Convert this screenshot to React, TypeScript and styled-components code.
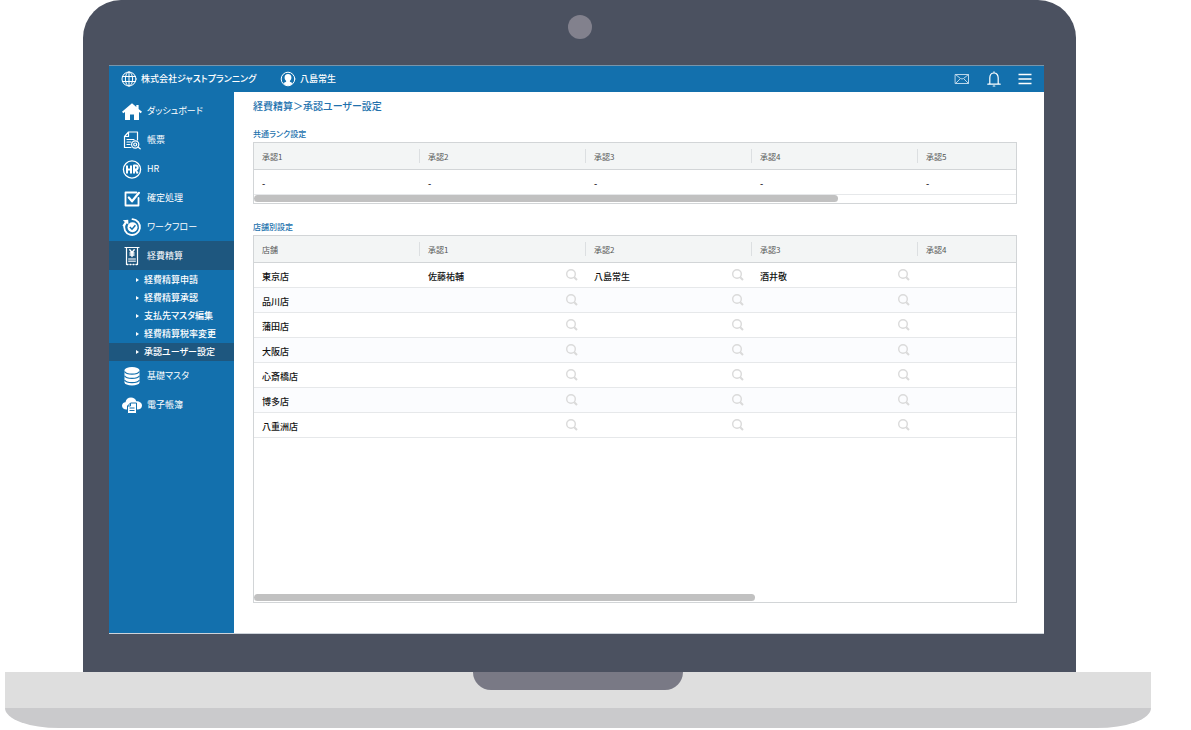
import React from 'react';
import styled, { createGlobalStyle } from 'styled-components';

const color = {
  lid: '#4b5160',
  camera: '#82818d',
  brand: '#1370ad',
  active: '#1e577f',
  link: '#2271ad',
  line: '#d2d5d7',
};

const GlobalStyle = createGlobalStyle`
  * { box-sizing: border-box; }
  body {
    margin: 0;
    background: #fff;
    font-family: "Noto Sans CJK JP", "Noto Sans", sans-serif;
    font-feature-settings: "palt";
    font-size: 9px;
    line-height: 12px;
    color: #111;
  }
  h1, h2 { margin: 0; }
  button { padding: 0; border: 0; background: none; color: inherit; font: inherit; cursor: pointer; }
  a { color: inherit; text-decoration: none; }
  svg { display: block; flex: none; }
`;

const Lid = styled.div`
  margin: 0 115px 0 83px;
  padding: 0 32px 38px 26px;
  background: ${color.lid};
  border-radius: 38px 38px 0 0;
`;

const Bezel = styled.div`
  height: 65px;
  display: flex;
  justify-content: center;
  padding: 15px 0 0 6px;
`;

const Camera = styled.span`
  width: 24px;
  height: 24px;
  border-radius: 50%;
  background: ${color.camera};
`;

const Screen = styled.div`
  display: flex;
  flex-direction: column;
  min-height: 569px;
  background: #fff;
  border-bottom: 1px solid #cdd3da;
`;

const TopBar = styled.header`
  display: flex;
  align-items: center;
  gap: 34px;
  height: 27px;
  padding: 0 12px;
  background: ${color.brand};
  border-top: 1px solid #7795ab;
  color: #fff;
  font-weight: 500;
`;

const Identity = styled.div`
  display: flex;
  align-items: center;
  gap: 4px;
`;

const Company = styled(Identity)`
  width: 125px;
  white-space: nowrap;
`;

const Tools = styled.div`
  display: flex;
  align-items: center;
  gap: 16px;
  margin-left: auto;
`;

const Body = styled.div`
  display: flex;
  flex: 1;
`;

const Sidebar = styled.nav`
  width: 125px;
  flex: none;
  padding-top: 4px;
  background: ${color.brand};
  color: #fff;
`;

const MenuList = styled.ul`
  margin: 0;
  padding: 0;
  list-style: none;
`;

const SubList = styled(MenuList)`
  padding-top: 1px;
`;

const NavLink = styled.a<{ $active?: boolean }>`
  display: flex;
  align-items: center;
  gap: 5px;
  height: 29px;
  padding-left: 13px;
  background: ${(p) => (p.$active ? color.active : 'transparent')};
`;

const SubLink = styled.a<{ $active?: boolean }>`
  display: flex;
  align-items: center;
  gap: 5px;
  height: 18px;
  padding-left: 27px;
  font-weight: 500;
  background: ${(p) => (p.$active ? color.active : 'transparent')};
  &::before {
    content: '';
    border: 2px solid transparent;
    border-left: 3px solid #fff;
    border-right: 0;
  }
`;

const Main = styled.main`
  display: flex;
  flex-direction: column;
  flex: 1;
  min-width: 0;
  padding: 6px 27px 30px 19px;
`;

const Title = styled.h1`
  font-size: 10px;
  line-height: 16px;
  font-weight: 500;
  color: ${color.link};
`;

const SectionTitle = styled.h2<{ $gap: number }>`
  margin-top: ${(p) => p.$gap}px;
  font-size: 8px;
  line-height: 16px;
  font-weight: 500;
  color: ${color.link};
`;

const GridBox = styled.div<{ $fill?: boolean }>`
  display: flex;
  flex-direction: column;
  flex: ${(p) => (p.$fill ? '1' : 'none')};
  border: 1px solid ${color.line};
`;

const Grid = styled.table`
  width: 100%;
  table-layout: fixed;
  border-collapse: separate;
  border-spacing: 0;
  tbody tr:nth-child(even) { background: #fbfcfe; }
`;

const Col = styled.col<{ $last?: boolean }>`
  width: ${(p) => (p.$last ? 'auto' : '166px')};
`;

const HeadCell = styled.th`
  height: 27px;
  padding: 0;
  background: #f3f5f5;
  border-bottom: 1px solid ${color.line};
  font-size: 8px;
  font-weight: 400;
  text-align: left;
  color: #555;
`;

const HeadLabel = styled.div<{ $last?: boolean }>`
  height: 14px;
  line-height: 16px;
  padding-left: 8px;
  border-right: ${(p) => (p.$last ? '0' : '1px solid #dcdfe1')};
`;

const Cell = styled.td`
  height: 25px;
  padding: 0 8px;
  border-bottom: 1px solid #e6e8ea;
  font-weight: 500;
`;

const CellContent = styled.div`
  display: flex;
  align-items: center;
  justify-content: space-between;
  height: 16px;
`;

const CellText = styled.span`
  padding-top: 4px;
`;

const Track = styled.div`
  height: 8px;
  margin-top: auto;
`;

const Thumb = styled.div`
  height: 7px;
  border-radius: 4px;
  background: #c1c1c1;
`;

const Deck = styled.div`
  display: flex;
  justify-content: center;
  height: 36px;
  margin: 0 40px 0 5px;
  background: #dedede;
`;

const Notch = styled.div`
  width: 210px;
  height: 18px;
  border-radius: 0 0 18px 18px;
  background: #797985;
`;

const Foot = styled.div`
  height: 20px;
  margin: 0 40px 0 5px;
  border-radius: 0 0 54px 54px / 0 0 20px 20px;
  background: #cacacc;
`;

const line = { fill: 'none', stroke: '#fff', strokeLinecap: 'round', strokeLinejoin: 'round' } as const;

const Globe = () => (
  <svg width="16" height="16" viewBox="0 0 16 16" {...line} strokeWidth="1">
    <circle cx="8" cy="8" r="7" />
    <ellipse cx="8" cy="8" rx="3.6" ry="7" />
    <path d="M8 1v14M1.500 5.500h13M1.500 10.500h13" />
  </svg>
);

const Person = () => (
  <svg width="16" height="16" viewBox="0 0 16 16">
    <circle cx="8" cy="8" r="6.800" {...line} strokeWidth="1" />
    <path fill="#fff" d="M8 3c2.200 0 3.400 1.500 3.400 3.400 0 1.500-.7 2.600-1.500 3.300v1l2.600 1.200c-1 1.600-2.600 2.600-4.500 2.600s-3.500-1-4.500-2.600l2.600-1.200v-1C5.300 9 4.600 7.900 4.600 6.400 4.600 4.500 5.800 3 8 3z" />
  </svg>
);

const Mail = () => (
  <svg width="16" height="16" viewBox="0 0 16 16" {...line} stroke="#b9d6ea" strokeWidth="1">
    <path d="M1.500 3.500h13v9h-13zM1.500 3.500l5 4q1.500 1 3 0l5-4M1.500 12.500l4.500-4.500M14.500 12.500l-4.500-4.500" />
  </svg>
);

const Bell = () => (
  <svg width="16" height="16" viewBox="0 0 16 16" {...line} strokeWidth="1.200">
    <path d="M3.800 13V7c0-3 1.800-5 4.200-5s4.200 2 4.200 5v6M1.800 13.200h12.400M8 .8v1M7.200 15h1.600" />
  </svg>
);

const Bars = () => (
  <svg width="14" height="14" viewBox="0 0 14 14" {...line} strokeLinecap="butt" strokeWidth="1.400">
    <path d="M.5 2.500h13M.5 7h13M.5 11.500h13" />
  </svg>
);

const Home = () => (
  <svg width="20" height="20" viewBox="0 0 20 20" fill="#fff">
    <path d="M10 2.200L0 10.800l1.300 1.500L3 10.900v8.100h5v-5.400h4V19h5v-8.100l1.700 1.400L20 10.800l-3.400-2.900V4h-2.300v1.900z" />
  </svg>
);

const Report = () => (
  <svg width="20" height="20" viewBox="0 0 20 20" {...line} strokeWidth="1.200">
    <path d="M9 17.500H2.500V6.500L6.500 2h9v8M6.500 2.500v4h-4M5 9.500h7M5 12h4M5 14.500h3M16 17l2.200 1.800" />
    <circle cx="13.200" cy="14.500" r="3.600" />
    <circle cx="13.200" cy="14.500" r="1.500" />
  </svg>
);

const Hr = () => (
  <svg width="20" height="20" viewBox="0 0 20 20" {...line}>
    <circle cx="10" cy="10.500" r="8.600" strokeWidth="1.300" />
    <path strokeWidth="2" strokeLinecap="butt" d="M5 6.500v8M9 6.500v8M5 10.500h4M12 14.500v-8h1.800q1.900 0 1.900 2t-1.900 2H12M13.500 10.500l2.200 4" />
  </svg>
);

const Check = () => (
  <svg width="20" height="20" viewBox="0 0 20 20" {...line}>
    <path strokeWidth="1.800" d="M16.500 10v7.500h-13V4.500h11" />
    <path strokeWidth="2.200" d="M6.800 9.500l3.200 3.800 7-8.500" />
  </svg>
);

const Flow = () => (
  <svg width="20" height="20" viewBox="0 0 20 20">
    <path {...line} strokeWidth="1.800" d="M10.500 2.200a7.900 7.900 0 1 1-7.800 5" />
    <path fill="#fff" d="M.8 3.300l5.400-.6.300 5-1.700-1.400-2.800 3.500-1.600-1 2.400-3.800z" />
    <circle cx="10.500" cy="10.200" r="5" fill="#fff" />
    <path d="M7.800 10l2.200 2.200 3.400-4" fill="none" stroke={color.brand} strokeWidth="1.500" />
  </svg>
);

const Receipt = () => (
  <svg width="20" height="20" viewBox="0 0 20 20" {...line} strokeWidth="1.200">
    <path d="M3 1.500h14M4.500 1.500v17M15.500 1.500v17" />
    <path strokeWidth="1.400" strokeDasharray="1 2" d="M5 18.500h10.500" />
    <path strokeWidth="1.400" d="M7.800 3.800L10 6.500l2.200-2.700M10 6.500v4M8 7h4M8 9h4" />
    <path stroke="#c3d2de" strokeWidth="1.600" strokeLinecap="butt" d="M6.200 13h7.600M6.200 15.200h7.600" />
  </svg>
);

const Database = () => (
  <svg width="20" height="20" viewBox="0 0 20 20">
    <path fill="#fff" d="M2.500 4a7.500 3 0 0 1 15 0v12.500a7.500 3 0 0 1-15 0z" />
    <path fill="none" stroke={color.brand} strokeWidth="1.200" d="M2.500 5.500q1.500 2.600 7.500 2.600t7.500-2.600M2.500 9.800q1.500 2.600 7.500 2.600t7.500-2.600M2.500 14q1.500 2.600 7.500 2.600t7.500-2.600" />
  </svg>
);

const Cloud = () => (
  <svg width="20" height="20" viewBox="0 0 20 20">
    <path fill="#fff" d="M4.500 14.500C2 14.500 0 13 0 10.800 0 8.800 1.500 7.500 3.500 7.300 3.900 4.500 6 2.500 9 2.500c2.600 0 4.500 1.300 5.300 3.700 3.200-.1 5.700 1.600 5.700 4.300 0 2.400-2 4-4.500 4z" />
    <path fill="#fff" stroke={color.brand} strokeWidth="1" d="M8.500 8h6v10.500H5.500V11z" />
    <path fill="none" stroke={color.brand} strokeWidth="1" d="M8.500 8v3h-3M7.500 13h5M7.500 15.500h5" />
  </svg>
);

const Search = () => (
  <svg width="12" height="12" viewBox="0 0 12 12" fill="none" stroke="#dadada">
    <circle cx="5" cy="5" r="4.300" strokeWidth="1.400" />
    <path strokeWidth="2" d="M8.200 8.200l2.800 2.800" />
  </svg>
);

const expenseMenu = ['経費精算申請', '経費精算承認', '支払先マスタ編集', '経費精算税率変更', '承認ユーザー設定'];

const menu = [
  { label: 'ダッシュボード', icon: <Home /> },
  { label: '帳票', icon: <Report /> },
  { label: 'HR', icon: <Hr /> },
  { label: '確定処理', icon: <Check /> },
  { label: 'ワークフロー', icon: <Flow /> },
  { label: '経費精算', icon: <Receipt />, children: expenseMenu },
  { label: '基礎マスタ', icon: <Database /> },
  { label: '電子帳簿', icon: <Cloud /> },
];

const rankColumns = ['承認1', '承認2', '承認3', '承認4', '承認5'];
const shopColumns = ['店舗', '承認1', '承認2', '承認3', '承認4'];
const shops = [
  ['東京店', '佐藤祐輔', '八島常生', '酒井敬', ''],
  ['品川店', '', '', '', ''],
  ['蒲田店', '', '', '', ''],
  ['大阪店', '', '', '', ''],
  ['心斎橋店', '', '', '', ''],
  ['博多店', '', '', '', ''],
  ['八重洲店', '', '', '', ''],
];

const GridHead = ({ columns }: { columns: string[] }) => (
  <>
    <colgroup>
      {columns.map((c, i) => (
        <Col key={c} $last={i === columns.length - 1} />
      ))}
    </colgroup>
    <thead>
      <tr>
        {columns.map((c, i) => (
          <HeadCell key={c} scope="col">
            <HeadLabel $last={i === columns.length - 1}>{c}</HeadLabel>
          </HeadCell>
        ))}
      </tr>
    </thead>
  </>
);

const ScrollBar = ({ share }: { share: number }) => (
  <Track>
    <Thumb style={{ width: `${share}%` }} />
  </Track>
);

export default function App() {
  return (
    <>
      <GlobalStyle />
      <Lid>
        <Bezel>
          <Camera />
        </Bezel>
        <Screen>
          <TopBar>
            <Company>
              <Globe />
              株式会社ジャストプランニング
            </Company>
            <Identity>
              <Person />
              八島常生
            </Identity>
            <Tools>
              <button aria-label="メール"><Mail /></button>
              <button aria-label="通知"><Bell /></button>
              <button aria-label="メニュー"><Bars /></button>
            </Tools>
          </TopBar>
          <Body>
            <Sidebar>
              <MenuList>
                {menu.map((m) => (
                  <li key={m.label}>
                    <NavLink href="#" $active={!!m.children}>
                      {m.icon}
                      {m.label}
                    </NavLink>
                    {m.children && (
                      <SubList>
                        {m.children.map((s) => (
                          <li key={s}>
                            <SubLink href="#" $active={s === '承認ユーザー設定'}>{s}</SubLink>
                          </li>
                        ))}
                      </SubList>
                    )}
                  </li>
                ))}
              </MenuList>
            </Sidebar>
            <Main>
              <Title>経費精算＞承認ユーザー設定</Title>
              <SectionTitle $gap={12}>共通ランク設定</SectionTitle>
              <GridBox>
                <Grid>
                  <GridHead columns={rankColumns} />
                  <tbody>
                    <tr>
                      {rankColumns.map((c) => (
                        <Cell key={c}>
                          <CellContent>
                            <CellText>-</CellText>
                          </CellContent>
                        </Cell>
                      ))}
                    </tr>
                  </tbody>
                </Grid>
                <ScrollBar share={76.7} />
              </GridBox>
              <SectionTitle $gap={15}>店舗別設定</SectionTitle>
              <GridBox $fill>
                <Grid>
                  <GridHead columns={shopColumns} />
                  <tbody>
                    {shops.map((row) => (
                      <tr key={row[0]}>
                        {row.map((value, i) => (
                          <Cell key={i}>
                            <CellContent>
                              <CellText>{value}</CellText>
                              {i > 0 && i < 4 && (
                                <button aria-label="検索"><Search /></button>
                              )}
                            </CellContent>
                          </Cell>
                        ))}
                      </tr>
                    ))}
                  </tbody>
                </Grid>
                <ScrollBar share={65.7} />
              </GridBox>
            </Main>
          </Body>
        </Screen>
      </Lid>
      <Deck>
        <Notch />
      </Deck>
      <Foot />
    </>
  );
}
